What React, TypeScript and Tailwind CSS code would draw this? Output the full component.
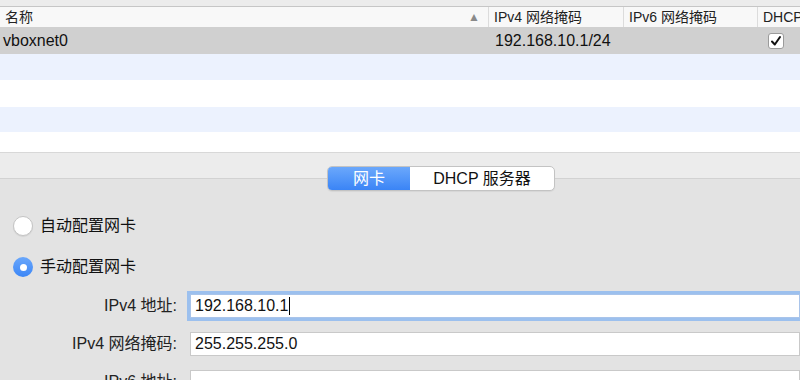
const font = { fontFamily: '"Liberation Sans", "Noto Sans CJK SC", sans-serif' };

function HeaderCell(props: { label: string; width: string; sort?: boolean; last?: boolean }) {
    const { label, width, sort, last } = props;
    return (
        <div className={`${width} h-full flex items-center pl-[5px] ${last ? "" : "pr-[8px] border-r border-[#dcdcdc]"}`}>
            <span className="flex-1 whitespace-nowrap">{label}</span>
            {sort && <span className="text-[#8a8a8a] text-[12px] leading-none">▲</span>}
        </div>
    );
}

function Radio(props: { checked?: boolean; label: string }) {
    const { checked, label } = props;
    return (
        <div className="flex items-center h-[20px]">
            {checked ? (
                <div className="w-[20px] h-[20px] rounded-full bg-gradient-to-b from-[#6aa7fb] to-[#3b86f6] flex items-center justify-center">
                    <div className="w-[7px] h-[7px] rounded-full bg-white" />
                </div>
            ) : (
                <div className="w-[20px] h-[20px] rounded-full bg-white border border-[#c4c4c4] shadow-[0_1px_1px_rgba(0,0,0,0.08)]" />
            )}
            <span className="ml-[7px] text-[16px] text-[#111]">{label}</span>
        </div>
    );
}

function Field(props: { label: string; value: string; focused?: boolean }) {
    const { label, value, focused } = props;
    return (
        <div className="flex items-center h-[24px]">
            <div className="w-[177px] text-right text-[16px] text-[#222] whitespace-nowrap">{label}</div>
            <div
                className={`ml-[13px] flex-1 h-[24px] bg-white flex items-center pl-[4px] text-[16px] text-[#111] ${
                    focused
                        ? "border border-[#a9c4ea] shadow-[0_0_0_3px_#9cc0ee]"
                        : "border border-[#c9c9c9]"
                }`}
            >
                {value}
                {focused && <span className="inline-block w-px h-[18px] bg-black ml-[1px]" />}
            </div>
        </div>
    );
}

export default function App() {
    return (
        <div className="w-[800px] h-[380px] overflow-hidden bg-[#ececec] text-[#1a1a1a]" style={font}>
            <div className="h-[7px] bg-[#ececec] border-b border-[#c6c6c6]" />
            <div className="h-[20px] bg-[#f8f8f8] flex text-[14px] text-[#222] overflow-hidden">
                <HeaderCell label="名称" width="w-[489px] shrink-0" sort />
                <HeaderCell label="IPv4 网络掩码" width="w-[135px] shrink-0" />
                <HeaderCell label="IPv6 网络掩码" width="w-[134px] shrink-0" />
                <HeaderCell label="DHCP" width="w-[60px] shrink-0" last />
            </div>
            <div className="flex flex-col bg-white border-b border-[#d8d8d8]">
                <div className="h-[27px] bg-[#d0d0d0] flex items-center text-[16px] text-[#111]">
                    <div className="w-[489px] pl-[3px]">vboxnet0</div>
                    <div className="w-[135px] pl-[6px]">192.168.10.1/24</div>
                    <div className="w-[134px]" />
                    <div className="w-[42px] flex pl-[10px]">
                        <div className="w-[16px] h-[16px] rounded-[3px] bg-white border border-[#9b9b9b] flex items-center justify-center">
                            <svg width="12" height="12" viewBox="0 0 12 12">
                                <path d="M2 6.5 L4.8 9.5 L10 2" fill="none" stroke="#111" strokeWidth="2" strokeLinecap="round" strokeLinejoin="round" />
                            </svg>
                        </div>
                    </div>
                </div>
                <div className="h-[26px] bg-[#ecf2fe]" />
                <div className="h-[27px] bg-white" />
                <div className="h-[25px] bg-[#ecf2fe]" />
                <div className="h-[20px] bg-white" />
            </div>
            <div className="pt-[13px] pl-[327px] relative z-10 -mb-[13px]">
                <div className="flex w-[228px] h-[25px] rounded-[5px] border border-[#c3c3c3] bg-white overflow-hidden text-[16px] shadow-[0_1px_1px_rgba(0,0,0,0.06)]">
                    <div className="w-[82px] bg-gradient-to-b from-[#6ba8fb] to-[#3a84f6] text-white flex items-center justify-center">网卡</div>
                    <div className="flex-1 flex items-center justify-center text-[#111]">DHCP 服务器</div>
                </div>
            </div>
            <div className="bg-[#e3e3e3] border-t border-[#d2d2d2] h-[240px] pt-[37px] pl-[13px] flex flex-col">
                <Radio label="自动配置网卡" />
                <div className="mt-[21px]">
                    <Radio label="手动配置网卡" checked />
                </div>
                <div className="mt-[17px] -ml-[13px] flex flex-col gap-[14px]">
                    <Field label="IPv4 地址:" value="192.168.10.1" focused />
                    <Field label="IPv4 网络掩码:" value="255.255.255.0" />
                    <Field label="IPv6 地址:" value="" />
                </div>
            </div>
        </div>
    );
}
